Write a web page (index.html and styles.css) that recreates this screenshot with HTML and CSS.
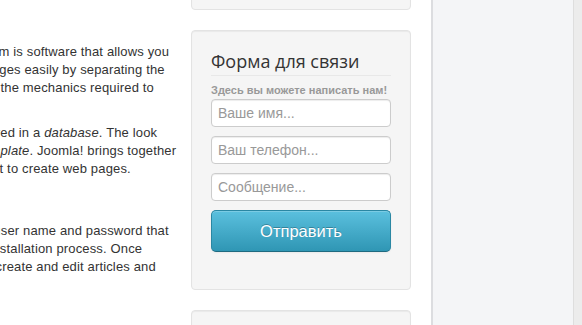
FILE: index.html
```html
<!DOCTYPE html>
<html>
<head>
  <title>Форма для связи</title>
  <link rel="stylesheet" href="styles.css">
</head>
<body>

  <div class="page">
    <!-- Main area -->
    <div class="main">
      <div class="content">
        <p>A content management system is software that allows you to create and manage webpages easily by separating the creation of your content from the mechanics required to present it on the web.</p>
        <p>In this site, the content is stored in a <em>database</em>. The look and feel are created by a <em>template</em>. Joomla! brings together the template and your content to create web pages.</p>
        <p class="after-heading">To login to your site use the user name and password that were created as part of the installation process. Once logged-in you will be able to create and edit articles and modify some settings.</p>
      </div>

      <!-- Sidebar -->
      <div class="sidebar">
        <div class="well well-top"></div>

        <div class="well contact-well">
          <h3 class="module-title">Форма для связи</h3>
          <div class="contact-note">Здесь вы можете написать нам!</div>
          <input class="field" type="text" placeholder="Ваше имя...">
          <input class="field" type="text" placeholder="Ваш телефон...">
          <input class="field" type="text" placeholder="Сообщение...">
          <button class="send-btn">Отправить</button>
        </div>

        <div class="well well-bottom"></div>
      </div>
    </div>

    <!-- Side panel -->
    <div class="side-panel">
      <div class="panel-edge"></div>
    </div>
  </div>

</body>
</html>
```

FILE: styles.css
```css
body {
  margin: 0;
  padding: 0;
  background-color: #fff;
  font-family: 'Liberation Sans', Arial, sans-serif;
  font-size: 13px;
  line-height: 18px;
  color: #333;
  height: 325px;
  overflow: hidden;
}

.page {
  display: flex;
  height: 325px;
}

/* Main area */
.main {
  width: 431px;
  flex-shrink: 0;
  display: flex;
  gap: 12px;
  padding-right: 20px;
  box-sizing: border-box;
  overflow: hidden;
}

.content {
  width: 352px;
  flex-shrink: 0;
  margin-left: -173px;
  padding-top: 43px;
  letter-spacing: 0.15px;
}

.content p {
  margin: 0 0 9px;
}

.content p.after-heading {
  margin-top: 44px;
}

/* Sidebar wells */
.sidebar {
  width: 220px;
  flex-shrink: 0;
}

.well {
  background-color: #f5f5f5;
  border: 1px solid #e3e3e3;
  border-radius: 4px;
  box-shadow: inset 0 1px 1px rgba(0,0,0,0.05);
  box-sizing: border-box;
  margin-bottom: 20px;
}

.well-top {
  height: 60px;
  margin-top: -50px;
}

.well-bottom {
  height: 100px;
}

.contact-well {
  height: 260px;
  padding: 19px;
}

.module-title {
  margin: 0;
  font-family: 'Open Sans', sans-serif;
  font-size: 18px;
  font-weight: normal;
  line-height: 23px;
  color: #333;
  padding-bottom: 2px;
  border-bottom: 1px solid #e8e8e8;
}

.contact-note {
  padding-top: 5px;
  font-size: 11px;
  font-weight: bold;
  line-height: 18px;
  color: #999;
}

.field {
  display: block;
  width: 180px;
  height: 28px;
  margin: 0 0 9px;
  padding: 0 6px;
  box-sizing: border-box;
  border: 1px solid #ccc;
  border-radius: 4px;
  background-color: #fff;
  box-shadow: inset 0 1px 1px rgba(0,0,0,0.075);
  font-family: 'Liberation Sans', Arial, sans-serif;
  font-size: 14px;
  color: #555;
}

.field::placeholder {
  color: #999;
}

.send-btn {
  display: block;
  width: 180px;
  height: 42px;
  padding: 0;
  border: 1px solid #2a87a3;
  border-bottom-color: #1f6a80;
  border-radius: 5px;
  background-color: #49afcd;
  background-image: linear-gradient(to bottom, #5bc0de, #2f96b4);
  box-shadow: inset 0 1px 0 rgba(255,255,255,0.2), 0 1px 2px rgba(0,0,0,0.05);
  font-family: 'Liberation Sans', Arial, sans-serif;
  font-size: 16.5px;
  color: #fff;
  text-shadow: 0 -1px 0 rgba(0,0,0,0.25);
  cursor: pointer;
}

/* Side panel */
.side-panel {
  flex: 1;
  display: flex;
  justify-content: flex-end;
  background-color: #f4f5f7;
  border-left: 2px solid #dcdde0;
}

.panel-edge {
  width: 8px;
  background-color: #ececec;
  border-left: 1px solid #dedede;
}
```
